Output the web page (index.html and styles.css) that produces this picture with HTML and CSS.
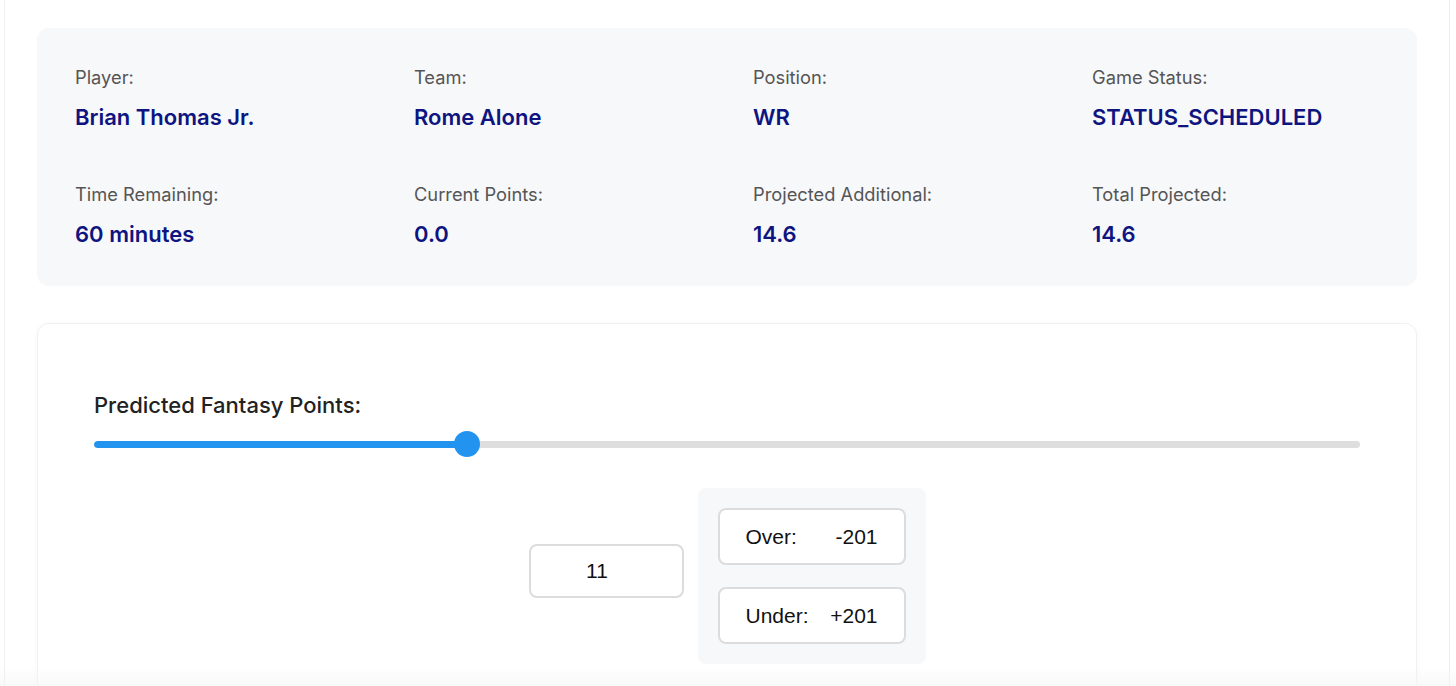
FILE: index.html
```html
<!DOCTYPE html>
<html lang="en">
<head>
<meta charset="utf-8">
<title>Player Prediction</title>
<link rel="stylesheet" href="styles.css">
</head>
<body>
<div class="page">
  <div class="outer">
    <section class="info">
      <div class="field"><div class="label">Player:</div><div class="value">Brian Thomas Jr.</div></div>
      <div class="field"><div class="label">Team:</div><div class="value">Rome Alone</div></div>
      <div class="field"><div class="label">Position:</div><div class="value">WR</div></div>
      <div class="field"><div class="label">Game Status:</div><div class="value">STATUS_SCHEDULED</div></div>
      <div class="field"><div class="label">Time Remaining:</div><div class="value">60 minutes</div></div>
      <div class="field"><div class="label">Current Points:</div><div class="value">0.0</div></div>
      <div class="field"><div class="label">Projected Additional:</div><div class="value">14.6</div></div>
      <div class="field"><div class="label">Total Projected:</div><div class="value">14.6</div></div>
    </section>
    <section class="predict">
      <div class="predict-label">Predicted Fantasy Points:</div>
      <div class="slider">
        <div class="track">
          <div class="fill" style="width: 373px"></div>
        </div>
        <div class="thumb" style="left: 360px"></div>
      </div>
      <div class="controls">
        <div class="points-box">11</div>
        <div class="odds">
          <div class="odd"><span>Over:</span><span>-201</span></div>
          <div class="odd"><span>Under:</span><span>+201</span></div>
        </div>
      </div>
    </section>
  </div>
</div>
<div class="fade"></div>
</body>
</html>
```

FILE: styles.css
```css
* { box-sizing: border-box; }
html, body { margin: 0; padding: 0; background: #ffffff; }
body {
  font-family: Inter, "Noto Sans", sans-serif;
  height: 686px;
  overflow: hidden;
}
.page {
  padding: 0 6px 0 4px;
}
.outer {
  border: 1px solid #efeff1;
  border-top: none;
  border-radius: 0 0 14px 14px;
  padding: 28px 32px 40px 32px;
  min-height: 760px;
}
.info {
  background: #f7f8fa;
  border-radius: 12px;
  padding: 38px 38px 38px 38px;
  display: grid;
  grid-template-columns: repeat(4, 1fr);
  column-gap: 52px;
  row-gap: 52px;
}
.label {
  font-size: 18.3px;
  line-height: 22px;
  color: #555555;
  font-weight: 400;
}
.value {
  margin-top: 16px;
  font-size: 22px;
  line-height: 27px;
  font-weight: 600;
  color: #0e1580;
}
.predict {
  margin-top: 37px;
  background: #ffffff;
  border: 1px solid #f1f1f3;
  border-radius: 12px;
  box-shadow: 0 1px 6px rgba(0, 0, 0, 0.03);
  padding: 68px 56px 60px 56px;
}
.predict-label {
  font-size: 22px;
  line-height: 26px;
  font-weight: 500;
  color: #222222;
}
.slider {
  position: relative;
  height: 26px;
  margin-top: 13px;
  display: flex;
  align-items: center;
}
.track {
  width: 100%;
  height: 7px;
  border-radius: 4px;
  background: #dedede;
  overflow: hidden;
}
.fill {
  height: 100%;
  background: #2393f0;
  border-radius: 4px;
}
.thumb {
  position: absolute;
  top: 0;
  width: 26px;
  height: 26px;
  border-radius: 50%;
  background: #2393f0;
}
.controls {
  margin-top: 31px;
  display: flex;
  justify-content: center;
  align-items: center;
  gap: 14px;
}
.points-box {
  width: 155px;
  height: 54px;
  margin-bottom: 11px;
  border: 2px solid #dcdcdc;
  border-radius: 8px;
  display: flex;
  align-items: center;
  justify-content: center;
  padding-right: 18px;
  font-family: "Liberation Sans", Arial, sans-serif;
  font-size: 21px;
  color: #111;
  background: #fff;
}
.odds {
  background: #f7f8fa;
  border-radius: 8px;
  padding: 20px;
  display: flex;
  flex-direction: column;
  gap: 22px;
}
.odd {
  width: 188px;
  height: 57px;
  border: 2px solid #dcdcdc;
  border-radius: 8px;
  background: #fff;
  display: flex;
  align-items: center;
  justify-content: space-between;
  padding: 0 26px;
  font-family: "Liberation Sans", Arial, sans-serif;
  font-size: 21px;
  color: #111;
}
.fade {
  position: fixed;
  left: 0;
  right: 0;
  bottom: 0;
  height: 20px;
  background: linear-gradient(to bottom, rgba(245,245,246,0), rgba(245,245,246,0.6));
  pointer-events: none;
}
```
